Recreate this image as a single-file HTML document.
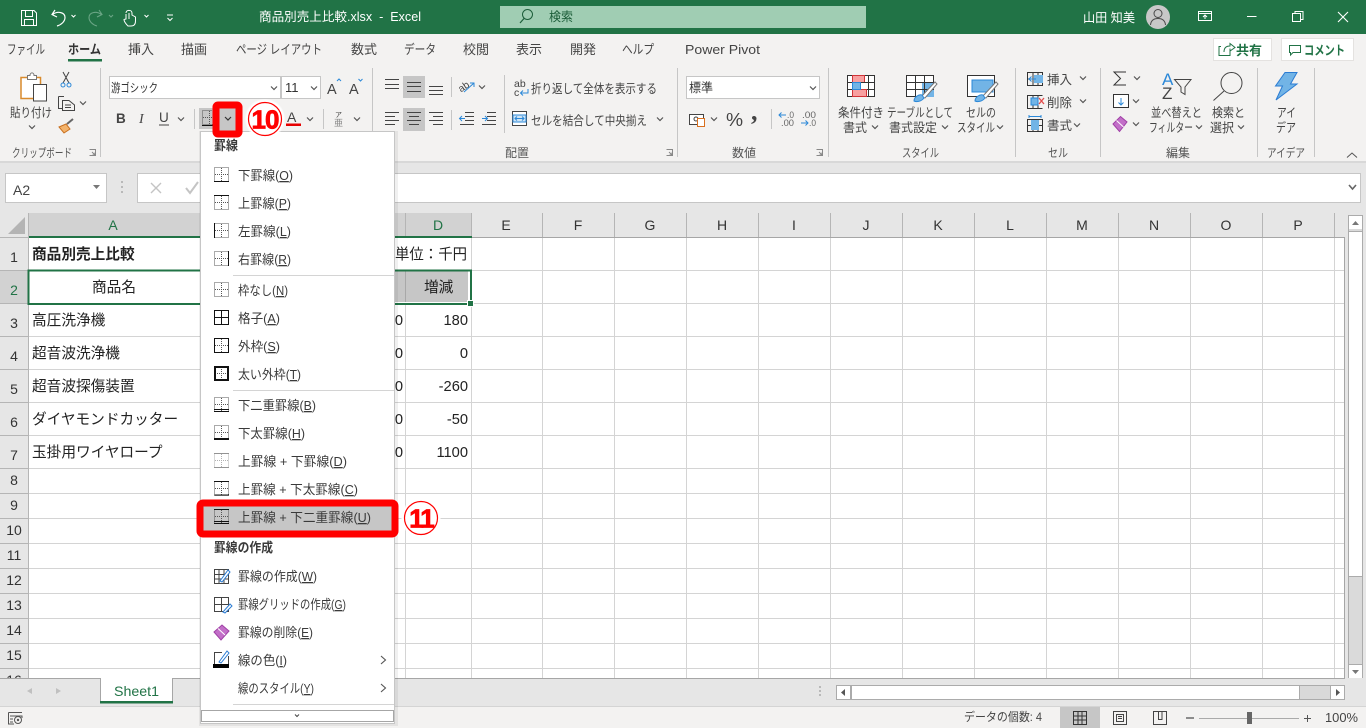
<!DOCTYPE html>
<html lang="ja"><head><meta charset="utf-8"><title>商品別売上比較.xlsx - Excel</title>
<style>
html,body{margin:0;padding:0;background:#e6e6e6;overflow:hidden;width:1366px;height:728px}
svg{display:block;position:absolute;left:0;top:0}
text{font-family:"Liberation Sans","Noto Sans CJK JP",sans-serif;font-size:12.5px;fill:#444;white-space:pre}
.w{fill:#fff}
.g{font-size:14.67px;fill:#222}
.h{font-size:14px;fill:#333}
.hs{font-size:14px;fill:#217346}
.b{font-weight:700}
.m{font-size:13px;fill:#3a3a3a}
.l{font-size:12px;fill:#555}
.tb{font-size:13px;fill:#444}
</style></head><body>
<svg width="1366" height="728" viewBox="0 0 1366 728">
<defs>
<path id="c" d="M-3-1.5L0 1.5L3-1.5" fill="none" stroke="#555" stroke-width="1.2"/>
<g id="dg" fill="none" stroke="#555" stroke-width="1" stroke-dasharray="1 1">
<path d="M.5.5H14.5V14.5H.5V.5M7.5 1V14M1 7.5H14"/>
</g>
</defs>

<!-- Title bar -->
<rect width="1366" height="34" fill="#217346"/>
<g fill="none" stroke="#fff" stroke-width="1">
<path d="M21.5 10.5H34L36.5 13V25.5H21.5ZM25.5 10.5V16.5H32.5V10.5M24.5 25.5V19.5H33.5V25.5"/>
<path d="M55 10L52 14.5L57 17M52.5 14.5C58 10.5 65 12.5 65 17.5C65 21.5 61 25 57 26" stroke-width="1.2"/>
<path d="M71.5 15l2 2 2-2M144.5 15l2 2 2-2"/>
<path d="M126 13C126 9.500 132 9.500 132 13V15L135.500 17V21C135.500 24 134 26 131 26H128C126 24 124 21.500 124 19.500L126 19V14M129 13V19M126 19.500"/>
<path d="M167 15H173M167.5 18l2.500 2.500 2.500-2.500"/>
</g>
<g fill="none" stroke="#6aa585" stroke-width="1.1">
<path d="M99 10L102 14.5L97 17M101.5 14.5C96 10.5 89 12.5 89 17.5C89 21.5 93 25 97 26"/>
<path d="M109 15l2 2 2-2"/>
</g>
<text class="w" x="259" y="21" textLength="162" lengthAdjust="spacingAndGlyphs">商品別売上比較.xlsx  -  Excel</text>
<rect x="500" y="6" width="366" height="22" fill="#a0cdb3"/>
<circle cx="527.5" cy="14.5" r="5" fill="none" stroke="#1d5e3a" stroke-width="1"/>
<path d="M524 18.5L520 23" stroke="#1d5e3a" stroke-width="1.2"/>
<text x="549" y="21" style="fill:#1d5e3a" textLength="24" lengthAdjust="spacingAndGlyphs">検索</text>
<text class="w" x="1083" y="22" textLength="52" lengthAdjust="spacingAndGlyphs">山田 知美</text>
<circle cx="1158" cy="17" r="12" fill="#c8c8c8"/>
<circle cx="1158" cy="13.5" r="4" fill="none" stroke="#4a4a4a"/>
<path d="M1150.5 25C1151 20 1154 18.5 1158 18.5S1165 20 1165.5 25" fill="none" stroke="#4a4a4a"/>
<g fill="none" stroke="#fff" stroke-width="1">
<path d="M1198.500 11.500H1211.500V20.500H1198.500ZM1198.500 13.500H1211.500M1205 19V15M1203 17l2-2 2 2"/>
<path d="M1247 16.500H1256.500"/>
<path d="M1292.500 13.500H1300.500V21.500H1292.500ZM1295 13V11.500H1303V19.500H1301"/>
<path d="M1338 12L1348 22M1348 12L1338 22" stroke-width="1.100"/>
</g>

<!-- Ribbon -->
<rect y="34" width="1366" height="127" fill="#f3f2f1"/>
<rect y="161" width="1366" height="2" fill="#d8d8d8"/>
<text class="tb" x="7" y="54" textLength="38" lengthAdjust="spacingAndGlyphs">ファイル</text>
<text x="68" y="54" class="tb b" textLength="33" lengthAdjust="spacingAndGlyphs" style="fill:#333">ホーム</text>
<rect x="68" y="59" width="34" height="2.5" fill="#217346"/>
<text class="tb" x="128" y="54" textLength="26" lengthAdjust="spacingAndGlyphs">挿入</text>
<text class="tb" x="181" y="54" textLength="26" lengthAdjust="spacingAndGlyphs">描画</text>
<text class="tb" x="236" y="54" textLength="86" lengthAdjust="spacingAndGlyphs">ページ レイアウト</text>
<text class="tb" x="351" y="54" textLength="26" lengthAdjust="spacingAndGlyphs">数式</text>
<text class="tb" x="404" y="54" textLength="32" lengthAdjust="spacingAndGlyphs">データ</text>
<text class="tb" x="463" y="54" textLength="26" lengthAdjust="spacingAndGlyphs">校閲</text>
<text class="tb" x="516" y="54" textLength="26" lengthAdjust="spacingAndGlyphs">表示</text>
<text class="tb" x="570" y="54" textLength="26" lengthAdjust="spacingAndGlyphs">開発</text>
<text class="tb" x="622" y="54" textLength="32" lengthAdjust="spacingAndGlyphs">ヘルプ</text>
<text class="tb" x="685" y="54" textLength="75" lengthAdjust="spacingAndGlyphs">Power Pivot</text>

<rect x="1213.5" y="38.5" width="58" height="22" fill="#fff" stroke="#e4e2e0"/>
<path d="M1221 46.5H1219V55.5H1230V51M1224 52C1224 47 1227 46 1230 46V43.5L1235 47.5L1230 51V48.5" fill="none" stroke="#217346"/>
<text x="1236" y="55" class="b" style="font-size:13px;fill:#217346" textLength="26" lengthAdjust="spacingAndGlyphs">共有</text>
<rect x="1281.5" y="38.5" width="72" height="22" fill="#fff" stroke="#e4e2e0"/>
<path d="M1289.5 45.5H1300.5V52.5H1293L1290.5 55V52.5H1289.5Z" fill="none" stroke="#217346"/>
<text x="1304" y="55" class="b" style="font-size:13px;fill:#217346" textLength="41" lengthAdjust="spacingAndGlyphs">コメント</text>

<g stroke="#c6c6c6" stroke-width="1">
<path d="M100.5 68V157M372.5 68V157M677.5 68V157M828.5 68V157M1015.5 68V157M1100.5 68V157M1257.5 68V157M1314.5 68V157M194.5 109V129M323.5 109V129M504.5 75V133M771.5 109V129"/>
<path d="M451.5 77V97M451.5 110V130"/>
</g>

<!-- clipboard -->
<path d="M21 77.500H40.500V98.500H21Z" fill="#fff" stroke="#d98a2b" stroke-width="1.500"/>
<path d="M27.500 79.500V75.500H30C30 72 34 72 34 75.500H36.500V79.500Z" fill="#fff" stroke="#777"/>
<rect x="33.500" y="84.500" width="13" height="16.500" fill="#fff" stroke="#444"/>
<path d="M63 72L69 83M69 72L63 83" stroke="#444" fill="none"/>
<circle cx="63" cy="85" r="2" fill="none" stroke="#2b88d8"/><circle cx="69" cy="85" r="2" fill="none" stroke="#2b88d8"/>
<path d="M58.500 96.500H64M58.500 96.500V108.500H62M62.500 100.500H69L74.500 105V110.500H62.500ZM65 105H71M65 107.500H71" fill="none" stroke="#444"/>
<use href="#c" x="83" y="103"/>
<path d="M59 127L66 124L70 129L64 133Z" fill="#f3b36b" stroke="#c9701f"/>
<path d="M67 124L73 119" stroke="#666" stroke-width="2"/>
<text x="10" y="117" textLength="42" lengthAdjust="spacingAndGlyphs">貼り付け</text>
<use href="#c" x="32" y="127"/>
<text x="12" y="157" class="l" textLength="60" lengthAdjust="spacingAndGlyphs">クリップボード</text>
<path d="M89.5 149.5H95.5V155.5H89.5M92 152L95 155M95 152.5V155H92.5" fill="none" stroke="#888"/>

<!-- font -->
<rect x="109.5" y="76.5" width="171" height="22" fill="#fff" stroke="#c6c6c6"/>
<rect x="281.5" y="76.5" width="39" height="22" fill="#fff" stroke="#c6c6c6"/>
<text x="111" y="92" style="font-size:12px;fill:#333" textLength="47" lengthAdjust="spacingAndGlyphs">游ゴシック</text>
<use href="#c" x="274" y="88"/>
<text x="285" y="92" style="fill:#333;font-size:13px">11</text>
<use href="#c" x="314" y="88"/>
<text x="327" y="94" style="font-size:14.500px">A</text>
<path d="M337 81l2-2 2 2" fill="none" stroke="#2b88d8"/>
<text x="349" y="94" style="font-size:14.500px">A</text>
<path d="M358.5 79l2 2 2-2" fill="none" stroke="#2b88d8"/>
<text x="116" y="123" class="b" style="font-size:13.500px">B</text>
<text x="139" y="123" style="font-size:14px;font-style:italic;font-family:'Liberation Serif',serif">I</text>
<text x="159" y="122" style="font-size:13.500px">U</text>
<path d="M159 125H169" stroke="#444"/>
<use href="#c" x="181" y="119"/>
<rect x="199" y="108" width="15" height="21" fill="#c6c6c6"/>
<use href="#dg" x="202" y="110"/>
<path d="M202 125.5H217" stroke="#111"/>
<text x="287" y="122" style="font-size:14px">A</text>
<rect x="286" y="123.5" width="15" height="2.5" fill="#e60000"/>
<use href="#c" x="310" y="119"/>
<text x="335" y="117" style="font-size:7px">ア</text>
<text x="334" y="126" style="font-size:9px;fill:#888">亜</text>
<use href="#c" x="357" y="119"/>

<!-- alignment -->
<rect x="403" y="76" width="22" height="22" fill="#c6c6c6"/>
<rect x="403" y="108" width="22" height="23" fill="#c6c6c6"/>
<path d="M385 79.5H399M385 84.5H399M385 88.5H399" stroke="#444" fill="none"/>
<path d="M407 82.5H421M407 86.5H421M407 91.5H421" stroke="#444" fill="none"/>
<path d="M429 86.5H443M429 90.5H443M429 94.5H443" stroke="#444" fill="none"/>
<path d="M385 112.5H399M385 116.5H395M385 120.5H399M385 124.5H395" stroke="#444" fill="none"/>
<path d="M407 112.5H421M409 116.5H419M407 120.5H421M409 124.5H419" stroke="#444" fill="none"/>
<path d="M429 112.5H443M433 116.5H443M429 120.5H443M433 124.5H443" stroke="#444" fill="none"/>
<text x="459" y="90" style="font-size:10px" transform="rotate(-35 464 88)">ab</text>
<path d="M464 92L474 83M470 83H474V87" fill="none" stroke="#2b88d8"/>
<use href="#c" x="482" y="87"/>
<path d="M460 124.5H474M465 112.5H474M465 116.5H474M465 120.5H474" stroke="#444" fill="none"/>
<path d="M460 118.5H465M462 116l-2.5 2.500 2.500 2.500" stroke="#2b88d8" fill="none"/>
<path d="M482 124.5H496M487 112.5H496M487 116.5H496M487 120.5H496" stroke="#444" fill="none"/>
<path d="M482 118.5H487M485 116l2.500 2.500-2.500 2.500" stroke="#2b88d8" fill="none"/>
<text x="514" y="87" style="font-size:10.500px">ab</text>
<text x="514" y="96" style="font-size:10.500px">c</text>
<path d="M528 89V93H521M523 90.500L520.500 93L523 95.500" fill="none" stroke="#2b88d8"/>
<text x="531" y="93" textLength="126" lengthAdjust="spacingAndGlyphs">折り返して全体を表示する</text>
<rect x="512.5" y="111.5" width="14" height="14" fill="#fff" stroke="#444"/>
<rect x="513" y="115" width="13" height="7" fill="#cfe4f5" stroke="#2b88d8"/>
<path d="M515 118.5H524M517 116.5l-2 2 2 2M522 116.5l2 2-2 2" fill="none" stroke="#2b88d8"/>
<text x="531" y="125" textLength="116" lengthAdjust="spacingAndGlyphs">セルを結合して中央揃え</text>
<use href="#c" x="660" y="119"/>
<text x="505" y="157" class="l" textLength="24" lengthAdjust="spacingAndGlyphs">配置</text>
<path d="M666.5 149.5H672.5V155.5H666.5M669 152L672 155M672 152.5V155H669.5" fill="none" stroke="#888"/>

<!-- number -->
<rect x="686.5" y="76.5" width="133" height="22" fill="#fff" stroke="#c6c6c6"/>
<text x="689" y="92" style="fill:#333" textLength="24" lengthAdjust="spacingAndGlyphs">標準</text>
<use href="#c" x="813" y="88"/>
<rect x="689.5" y="114.5" width="14" height="10" fill="#fff" stroke="#444"/>
<circle cx="696" cy="119" r="2" fill="none" stroke="#444"/>
<rect x="697.5" y="118.5" width="7" height="8" fill="#fff" stroke="#d9701f"/>
<use href="#c" x="714" y="119"/>
<text x="726" y="126" style="font-size:18px;letter-spacing:-1px" textLength="16" lengthAdjust="spacingAndGlyphs">%</text>
<text x="751" y="120" class="b" style="font-size:26px;font-family:'Liberation Serif',serif">,</text>
<text x="787" y="118" style="font-size:9px;fill:#666" textLength="7" lengthAdjust="spacingAndGlyphs">.0</text><text x="781" y="126" style="font-size:9px;fill:#666" textLength="13" lengthAdjust="spacingAndGlyphs">.00</text>
<path d="M779 115H786M781.5 112.5L779 115L781.5 117.5" stroke="#2b88d8" fill="none"/>
<text x="802" y="118" style="font-size:9px;fill:#666" textLength="14" lengthAdjust="spacingAndGlyphs">.00</text><text x="809" y="126" style="font-size:9px;fill:#666" textLength="7" lengthAdjust="spacingAndGlyphs">.0</text>
<path d="M801 123H808M805.5 120.500L808 123L805.5 125.500" stroke="#2b88d8" fill="none"/>
<text x="732" y="157" class="l" textLength="24" lengthAdjust="spacingAndGlyphs">数値</text>
<path d="M816.5 149.5H822.5V155.5H816.5M819 152L822 155M822 152.5V155H819.5" fill="none" stroke="#888"/>

<!-- styles -->
<g>
<rect x="847.5" y="75.5" width="27" height="21" fill="#fff" stroke="#333"/>
<rect x="852.5" y="75.5" width="12" height="7" fill="#f8a0a0" stroke="#d13438"/>
<rect x="852.5" y="89.5" width="14" height="7" fill="#f8a0a0" stroke="#d13438"/>
<rect x="852.5" y="82.5" width="8" height="7" fill="#72b4e6" stroke="#2b88d8"/>
<path d="M847 82.5H852M861 82.5H875M847 89.5H852M867 89.5H875M868.5 75V97" stroke="#333" fill="none"/>
</g>
<g>
<rect x="906.5" y="75.5" width="27" height="21" fill="#fff" stroke="#333"/>
<rect x="922" y="82" width="12" height="15" fill="#72b4e6"/>
<path d="M906 82.5H934M906 89.5H934M915.5 75V97M924.5 75V97" stroke="#333" fill="none"/>
<path d="M921 97L935 82L937 84L925 98Z" fill="#fff" stroke="#777"/>
<path d="M914 101C914 97 919 94 922 95L924 98C921 102 916 102 914 101Z" fill="#72b4e6" stroke="#2b88d8"/>
</g>
<g>
<rect x="967.5" y="75.5" width="27" height="21" fill="#fff" stroke="#333"/>
<rect x="972" y="80" width="21" height="12" fill="#72b4e6" stroke="#2b88d8"/>
<path d="M982 97L996 82L998 84L986 98Z" fill="#fff" stroke="#777"/>
<path d="M975 101C975 97 980 94 983 95L985 98C982 102 977 102 975 101Z" fill="#72b4e6" stroke="#2b88d8"/>
</g>
<text x="838" y="117" textLength="46" lengthAdjust="spacingAndGlyphs">条件付き</text>
<text x="843" y="132" textLength="24" lengthAdjust="spacingAndGlyphs">書式</text><use href="#c" x="875" y="127"/>
<text x="887" y="117" textLength="66" lengthAdjust="spacingAndGlyphs">テーブルとして</text>
<text x="889" y="132" textLength="48" lengthAdjust="spacingAndGlyphs">書式設定</text><use href="#c" x="945" y="127"/>
<text x="966" y="117" textLength="30" lengthAdjust="spacingAndGlyphs">セルの</text>
<text x="957" y="132" textLength="38" lengthAdjust="spacingAndGlyphs">スタイル</text><use href="#c" x="1000" y="127"/>
<text x="902" y="157" class="l" textLength="37" lengthAdjust="spacingAndGlyphs">スタイル</text>

<!-- cells -->
<g fill="none" stroke="#333">
<path d="M1027.5 72.5H1042.5V85.5H1027.5ZM1027 79H1043M1033 72V86M1038 72V86"/>
<path d="M1027.5 95.5H1042.5M1027.5 108.5H1042.5M1033 95V109M1038 95V109M1027.5 95V109"/>
<path d="M1027.5 119.5H1042.5V131.5H1027.5ZM1027 125.5H1043M1033 119V132M1038 119V132"/>
</g>
<rect x="1034" y="75" width="9" height="8" fill="#72b4e6"/>
<path d="M1029 79H1036M1031.5 76.5L1029 79L1031.5 81.5" fill="none" stroke="#2b88d8"/>
<rect x="1031" y="98" width="7" height="7" fill="#72b4e6" stroke="#2b88d8"/>
<path d="M1039 98L1044 104M1044 98L1039 104" stroke="#e34a4a" stroke-width="1.3"/>
<rect x="1031" y="120" width="8" height="10" fill="#72b4e6"/>
<path d="M1029 116.5H1041M1029 115V118M1041 115V118" stroke="#2b88d8" fill="none"/>
<text x="1047" y="84" textLength="25" lengthAdjust="spacingAndGlyphs">挿入</text><use href="#c" x="1083" y="78"/>
<text x="1047" y="107" textLength="25" lengthAdjust="spacingAndGlyphs">削除</text><use href="#c" x="1083" y="101"/>
<text x="1047" y="130" textLength="25" lengthAdjust="spacingAndGlyphs">書式</text><use href="#c" x="1077" y="125"/>
<text x="1048" y="157" class="l" textLength="20" lengthAdjust="spacingAndGlyphs">セル</text>

<!-- editing -->
<path d="M1126 72H1114L1120.5 78.5L1114 85H1126" fill="none" stroke="#333"/>
<use href="#c" x="1137" y="78"/>
<rect x="1113.5" y="94.5" width="15" height="13" fill="#fff" stroke="#333"/>
<path d="M1121 98V105M1118.5 102.5L1121 105L1123.5 102.5" fill="none" stroke="#2b88d8"/>
<use href="#c" x="1136" y="101"/>
<path d="M1113 124L1120.5 116.5L1127 122L1119.5 131.5Z" fill="#c26fc8" stroke="#a03fa6"/>
<path d="M1116.5 120.5L1123.5 127" stroke="#fff" fill="none"/>
<use href="#c" x="1136" y="124"/>
<text x="1162" y="85" style="font-size:17px;fill:#2b88d8">A</text>
<text x="1162" y="99" style="font-size:17px">Z</text>
<path d="M1174.5 79.5H1191L1185 87V94.500L1181 92V87Z" fill="none" stroke="#444"/>
<text x="1151" y="117" textLength="51" lengthAdjust="spacingAndGlyphs">並べ替えと</text>
<text x="1149" y="132" textLength="44" lengthAdjust="spacingAndGlyphs">フィルター</text><use href="#c" x="1199" y="127"/>
<circle cx="1231.5" cy="83" r="10.5" fill="none" stroke="#444"/>
<path d="M1224 91L1213.5 100.5" stroke="#444" fill="none"/>
<text x="1212" y="117" textLength="33" lengthAdjust="spacingAndGlyphs">検索と</text>
<text x="1210" y="132" textLength="24" lengthAdjust="spacingAndGlyphs">選択</text><use href="#c" x="1241" y="127"/>
<text x="1166" y="157" class="l" textLength="24" lengthAdjust="spacingAndGlyphs">編集</text>
<!-- ideas -->
<path d="M1285 72.5H1297L1290.5 84H1297L1276 100L1282.5 86H1275.5Z" fill="#72b4e6" stroke="#2b7cd3"/>
<text x="1277" y="117" textLength="19" lengthAdjust="spacingAndGlyphs">アイ</text>
<text x="1276" y="132" textLength="20" lengthAdjust="spacingAndGlyphs">デア</text>
<text x="1267" y="157" class="l" textLength="38" lengthAdjust="spacingAndGlyphs">アイデア</text>
<path d="M1347 157.5L1352 153L1357 157.5" fill="none" stroke="#555"/>

<!-- Formula row -->
<rect y="163" width="1366" height="50" fill="#e6e6e6"/>
<rect x="5.5" y="173.5" width="101" height="29" fill="#fff" stroke="#c6c6c6"/>
<text x="13" y="195" style="font-size:14px">A2</text>
<path d="M93 185H100L96.5 189Z" fill="#777"/>
<path d="M122 181V183M122 186V188M122 191V193" stroke="#aaa" stroke-width="1.5"/>
<rect x="137.5" y="173.5" width="1223" height="29" fill="#fff" stroke="#c6c6c6"/>
<path d="M151 183L161 193M161 183L151 193" stroke="#c4c4c4" stroke-width="1.4"/>
<path d="M186 188L190 193L198 182" stroke="#c4c4c4" stroke-width="2" fill="none"/>
<path d="M1349 185L1352.5 189L1356 185" fill="none" stroke="#666" stroke-width="1.6"/>

<!-- Sheet -->
<rect x="29" y="237" width="1315" height="441" fill="#fff"/>
<rect y="213" width="1345" height="24" fill="#e6e6e6"/>
<rect x="29" y="213" width="442" height="24" fill="#d2d2d2"/>
<rect y="237" width="28" height="441" fill="#e6e6e6"/>
<rect y="270" width="28" height="33" fill="#d2d2d2"/>
<path d="M8 234L25 217V234Z" fill="#b4b4b4"/>
<g stroke="#d4d4d4" stroke-width="1" fill="none">
<path d="M29 270.5H1344M29 303.5H1344M29 336.5H1344M29 369.5H1344M29 402.5H1344M29 435.5H1344M29 468.5H1344M29 493.5H1344M29 518.5H1344M29 543.5H1344M29 568.5H1344M29 593.5H1344M29 618.5H1344M29 643.5H1344M29 668.5H1344"/>
<path d="M405.5 303V678M471.5 237V678M542.5 237V678M614.5 237V678M686.5 237V678M758.5 237V678M830.5 237V678M902.5 237V678M974.5 237V678M1046.5 237V678M1118.5 237V678M1190.5 237V678M1262.5 237V678M1334.5 237V678"/>
</g>
<g stroke="#b5b5b5" stroke-width="1" fill="none">
<path d="M28.5 213V237M405.5 213V237M471.5 213V237M542.5 213V237M614.5 213V237M686.5 213V237M758.5 213V237M830.5 213V237M902.5 213V237M974.5 213V237M1046.5 213V237M1118.5 213V237M1190.5 213V237M1262.5 213V237M1334.5 213V237"/>
<path d="M28.5 237V678M0 237.5H28M0 270.5H28M0 303.5H28M0 336.5H28M0 369.5H28M0 402.5H28M0 435.5H28M0 468.5H28M0 493.5H28M0 518.5H28M0 543.5H28M0 568.5H28M0 593.5H28M0 618.5H28M0 643.5H28M0 668.5H28"/>
<path d="M471 237.5H1344.5V678" stroke="#a6a6a6"/>
</g>
<rect x="29" y="236" width="443" height="2" fill="#217346"/>
<rect x="300" y="271" width="168" height="31" fill="#c6c6c6"/>
<rect x="405" y="271" width="1" height="31" fill="#a8a8a8"/>
<rect x="29" y="271" width="171" height="32" fill="#fff"/>
<rect x="28.5" y="270.5" width="442.5" height="33.5" fill="none" stroke="#217346" stroke-width="2"/>
<rect x="467" y="300" width="7" height="7" fill="#fff"/>
<rect x="468" y="301" width="5" height="5" fill="#217346"/>

<g text-anchor="middle">
<text class="hs" x="113" y="230">A</text><text class="hs" x="438" y="230">D</text>
<text class="h" x="506" y="230">E</text><text class="h" x="578" y="230">F</text><text class="h" x="650" y="230">G</text><text class="h" x="722" y="230">H</text><text class="h" x="794" y="230">I</text><text class="h" x="866" y="230">J</text><text class="h" x="938" y="230">K</text><text class="h" x="1010" y="230">L</text><text class="h" x="1082" y="230">M</text><text class="h" x="1154" y="230">N</text><text class="h" x="1226" y="230">O</text><text class="h" x="1298" y="230">P</text>
<text class="h" x="14" y="262">1</text><text class="hs" x="14" y="295">2</text><text class="h" x="14" y="328">3</text><text class="h" x="14" y="361">4</text><text class="h" x="14" y="394">5</text><text class="h" x="14" y="427">6</text><text class="h" x="14" y="460">7</text><text class="h" x="14" y="485">8</text><text class="h" x="14" y="510">9</text><text class="h" x="14" y="535">10</text><text class="h" x="14" y="560">11</text><text class="h" x="14" y="585">12</text><text class="h" x="14" y="610">13</text><text class="h" x="14" y="635">14</text><text class="h" x="14" y="660">15</text><text class="h" x="14" y="685">16</text>
</g>
<text class="g b" x="32" y="259">商品別売上比較</text>
<text class="g" x="92" y="292">商品名</text>
<text class="g" x="32" y="325">高圧洗浄機</text>
<text class="g" x="32" y="358">超音波洗浄機</text>
<text class="g" x="32" y="391">超音波探傷装置</text>
<text class="g" x="32" y="424">ダイヤモンドカッター</text>
<text class="g" x="32" y="457">玉掛用ワイヤロープ</text>
<text class="g" x="395" y="259" textLength="72" lengthAdjust="spacingAndGlyphs">単位：千円</text>
<text class="g" x="424" y="292">増減</text>
<g text-anchor="end">
<text class="g" x="403" y="325">0</text><text class="g" x="403" y="358">0</text><text class="g" x="403" y="391">0</text><text class="g" x="403" y="424">0</text><text class="g" x="403" y="457">0</text>
<text class="g" x="468" y="325">180</text><text class="g" x="468" y="358">0</text><text class="g" x="468" y="391">-260</text><text class="g" x="468" y="424">-50</text><text class="g" x="468" y="457">1100</text>
</g>

<!-- vertical scrollbar -->
<rect x="1345" y="213" width="21" height="465" fill="#e6e6e6"/>
<rect x="1348.5" y="215.5" width="14" height="459" fill="#dadada" stroke="#ababab"/>
<rect x="1349" y="216" width="13" height="13" fill="#fff"/>
<path d="M1352 225H1359L1355.5 221Z" fill="#777"/>
<rect x="1348.5" y="231.5" width="14" height="345" fill="#fff" stroke="#ababab"/>
<rect x="1348.5" y="664.5" width="14" height="14" fill="#fff" stroke="#ababab"/>
<path d="M1352 670H1359L1355.5 674Z" fill="#777"/>

<!-- tabs bar -->
<rect y="678" width="1366" height="28" fill="#e6e6e6"/>
<path d="M0 678.5H1345" stroke="#a6a6a6"/>
<rect x="100" y="678" width="72" height="24" fill="#fff"/>
<path d="M100.5 678V702M172.5 678V702" stroke="#a6a6a6"/>
<rect x="100" y="701" width="73" height="2.5" fill="#217346"/>
<text x="114" y="696" style="font-size:14px;fill:#217346" textLength="45" lengthAdjust="spacingAndGlyphs">Sheet1</text>
<path d="M32 688V694L27 691ZM56 688V694L61 691Z" fill="#c0c0c0"/>
<path d="M820 686V688M820 690V692M820 694V696" stroke="#aaa" stroke-width="1.5"/>
<rect x="836.5" y="685.5" width="508" height="14" fill="#d9d9d9" stroke="#ababab"/>
<rect x="836.5" y="685.5" width="14" height="14" fill="#fff" stroke="#ababab"/>
<path d="M845 689V696L841 692.5Z" fill="#555"/>
<rect x="851.5" y="685.5" width="448" height="14" fill="#fff" stroke="#ababab"/>
<rect x="1330.5" y="685.5" width="14" height="14" fill="#fff" stroke="#ababab"/>
<path d="M1336 689V696L1340 692.5Z" fill="#555"/>

<!-- status bar -->
<rect y="706" width="1366" height="22" fill="#f3f2f1"/>
<path d="M0 706.5H1366" stroke="#d4d4d4"/>
<path d="M8.5 712.5H22M8.5 712.5V724H14M10 716H22V718M10 719H13M10 722H13" fill="none" stroke="#555"/>
<circle cx="18" cy="720" r="3.5" fill="none" stroke="#555"/><circle cx="18" cy="720" r="1.2" fill="#555"/>
<text x="964" y="721" style="font-size:12px" textLength="78" lengthAdjust="spacingAndGlyphs">データの個数: 4</text>
<rect x="1060" y="707" width="40" height="21" fill="#c6c6c6"/>
<path d="M1073.5 711.5H1086.5V724.5H1073.5ZM1073.5 716H1086.5M1073.5 720H1086.5M1078 711.5V724.5M1082 711.5V724.5" fill="none" stroke="#333"/>
<path d="M1113.5 711.5H1126.5V724.5H1113.5ZM1116.5 714.5H1123.5V721.5H1116.5ZM1118 716.5H1122M1118 718.5H1122" fill="none" stroke="#444"/>
<path d="M1153.5 711.5H1166.5V724.5H1153.5ZM1158.5 711.5V719.5H1162V711.5" fill="none" stroke="#444"/>
<path d="M1186 718H1194" stroke="#555" stroke-width="1.3"/>
<path d="M1199 718.5H1299" stroke="#aaa"/>
<rect x="1247" y="712" width="5" height="12" fill="#666"/>
<path d="M1304 718.5H1311M1307.5 715V722" stroke="#555"/>
<text x="1325" y="722" style="font-size:12.500px" textLength="33" lengthAdjust="spacingAndGlyphs">100%</text>

<!-- Menu -->
<rect x="199" y="131" width="199" height="595" fill="#000" opacity=".06"/>
<rect x="200.5" y="131.5" width="194" height="592" fill="#fff" stroke="#c6c6c6"/>
<text class="m b" x="214" y="150" textLength="24" lengthAdjust="spacingAndGlyphs">罫線</text>
<g stroke="#d4d4d4"><path d="M233 275.5H394M233 390.5H394M233 704.5H394"/></g>

<use href="#dg" x="214" y="167"/><path d="M214 181.5H229" stroke="#111"/>
<use href="#dg" x="214" y="195"/><path d="M214 195.5H229" stroke="#111"/>
<use href="#dg" x="214" y="223"/><path d="M214.5 223V238" stroke="#111"/>
<use href="#dg" x="214" y="251"/><path d="M228.5 251V266" stroke="#111"/>
<use href="#dg" x="214" y="282"/>
<path d="M214.5 310.5H228.5V324.5H214.5ZM221.5 310V325M214 317.5H229" fill="none" stroke="#111"/>
<use href="#dg" x="214" y="338"/><rect x="214.5" y="338.5" width="14" height="14" fill="none" stroke="#111"/>
<use href="#dg" x="214" y="366"/><rect x="215" y="367" width="13" height="13" fill="none" stroke="#111" stroke-width="2"/>
<use href="#dg" x="214" y="397"/><path d="M214 409.5H229M214 411.5H229" stroke="#111"/>
<use href="#dg" x="214" y="425"/><path d="M214 439H229" stroke="#111" stroke-width="2"/>
<g opacity=".45"><use href="#dg" x="214" y="453"/><path d="M214 453.5H229M214 467.5H229" stroke="#111"/></g>
<use href="#dg" x="214" y="481"/><path d="M214 481.5H229M214 495H229" stroke="#111"/>

<text class="m" x="238" y="180" textLength="55" lengthAdjust="spacingAndGlyphs">下罫線(<tspan text-decoration="underline">O</tspan>)</text>
<text class="m" x="238" y="208" textLength="53" lengthAdjust="spacingAndGlyphs">上罫線(<tspan text-decoration="underline">P</tspan>)</text>
<text class="m" x="238" y="236" textLength="53" lengthAdjust="spacingAndGlyphs">左罫線(<tspan text-decoration="underline">L</tspan>)</text>
<text class="m" x="238" y="264" textLength="53" lengthAdjust="spacingAndGlyphs">右罫線(<tspan text-decoration="underline">R</tspan>)</text>
<text class="m" x="238" y="295" textLength="50" lengthAdjust="spacingAndGlyphs">枠なし(<tspan text-decoration="underline">N</tspan>)</text>
<text class="m" x="238" y="323" textLength="42" lengthAdjust="spacingAndGlyphs">格子(<tspan text-decoration="underline">A</tspan>)</text>
<text class="m" x="238" y="351" textLength="42" lengthAdjust="spacingAndGlyphs">外枠(<tspan text-decoration="underline">S</tspan>)</text>
<text class="m" x="238" y="379" textLength="63" lengthAdjust="spacingAndGlyphs">太い外枠(<tspan text-decoration="underline">T</tspan>)</text>
<text class="m" x="238" y="410" textLength="78" lengthAdjust="spacingAndGlyphs">下二重罫線(<tspan text-decoration="underline">B</tspan>)</text>
<text class="m" x="238" y="438" textLength="67" lengthAdjust="spacingAndGlyphs">下太罫線(<tspan text-decoration="underline">H</tspan>)</text>
<text class="m" x="238" y="466" textLength="109" lengthAdjust="spacingAndGlyphs">上罫線 + 下罫線(<tspan text-decoration="underline">D</tspan>)</text>
<text class="m" x="238" y="494" textLength="120" lengthAdjust="spacingAndGlyphs">上罫線 + 下太罫線(<tspan text-decoration="underline">C</tspan>)</text>

<!-- highlighted item -->
<rect x="202" y="505" width="192" height="27" fill="#c6c6c6"/>
<use href="#dg" x="214" y="509"/><path d="M214 509.5H229M214 521.5H229M214 523.5H229" stroke="#111"/>
<text class="m" x="238" y="522" textLength="133" lengthAdjust="spacingAndGlyphs">上罫線 + 下二重罫線(<tspan text-decoration="underline">U</tspan>)</text>

<text class="m b" x="214" y="552" textLength="59" lengthAdjust="spacingAndGlyphs">罫線の作成</text>
<path d="M214.5 569.5H228.5V583.5H214.5ZM214 574.5H229M214 579H229M219 569V584M224 569V584" fill="none" stroke="#444"/>
<path d="M220 581L228 570L230 572L222 582Z" fill="#fff" stroke="#2b7cd3"/>
<path d="M214.5 597.5H228.5V611.5H214.5ZM221.5 597V612M214 604.5H229" fill="none" stroke="#444"/>
<path d="M223 612L230 604L232 606L225 613Z" fill="#fff" stroke="#2b7cd3"/>
<path d="M214 632L222 625L229 631L221 640Z" fill="#c26fc8" stroke="#a03fa6"/>
<path d="M218 628.5L225 635" stroke="#fff"/>
<path d="M214.5 664.5V652.5H222M228.5 656V664.5" fill="none" stroke="#444"/>
<path d="M219 662L227 651L229 653L221 663Z" fill="#fff" stroke="#2b7cd3"/>
<rect x="213" y="664" width="16" height="4" fill="#000"/>
<text class="m" x="238" y="581" textLength="79" lengthAdjust="spacingAndGlyphs">罫線の作成(<tspan text-decoration="underline">W</tspan>)</text>
<text class="m" x="238" y="609" textLength="108" lengthAdjust="spacingAndGlyphs">罫線グリッドの作成(<tspan text-decoration="underline">G</tspan>)</text>
<text class="m" x="238" y="637" textLength="75" lengthAdjust="spacingAndGlyphs">罫線の削除(<tspan text-decoration="underline">E</tspan>)</text>
<text class="m" x="238" y="665" textLength="49" lengthAdjust="spacingAndGlyphs">線の色(<tspan text-decoration="underline">I</tspan>)</text>
<text class="m" x="238" y="693" textLength="76" lengthAdjust="spacingAndGlyphs">線のスタイル(<tspan text-decoration="underline">Y</tspan>)</text>
<path d="M381 656L385.5 660L381 664M381 684L385.5 688L381 692" fill="none" stroke="#555" stroke-width="1.1"/>
<rect x="201.5" y="710.5" width="192" height="11" fill="#fff" stroke="#a6a6a6"/>
<path d="M295 714.5L297 716.5L299 714.5" fill="none" stroke="#444"/>

<!-- Annotations -->
<rect x="216" y="105" width="23" height="29" rx="2" fill="#c6c6c6" stroke="#f00" stroke-width="7"/>
<path d="M225 117L228 120L231 117" fill="none" stroke="#333" stroke-width="1.2"/>
<rect x="200" y="503" width="195" height="31" rx="3" fill="none" stroke="#f00" stroke-width="7"/>

<circle cx="265" cy="119" r="20" fill="#fff" opacity=".55"/>
<circle cx="265" cy="119" r="19" fill="#fff"/>
<circle cx="265" cy="119" r="16.5" fill="#fff" stroke="#f00" stroke-width="1.2"/>
<text x="265" y="128.500" text-anchor="middle" class="b" style="font-size:26px;fill:#f00;font-family:'Liberation Sans',sans-serif;letter-spacing:-1px;stroke:#f00;stroke-width:.8px">10</text>
<circle cx="421" cy="518" r="20" fill="#fff" opacity=".55"/>
<circle cx="421" cy="518" r="19" fill="#fff"/>
<circle cx="421" cy="518" r="16.5" fill="#fff" stroke="#f00" stroke-width="1.2"/>
<text x="421" y="527.500" text-anchor="middle" class="b" style="font-size:26px;fill:#f00;font-family:'Liberation Sans',sans-serif;letter-spacing:-2px;stroke:#f00;stroke-width:.8px">11</text>
</svg>
</body></html>
